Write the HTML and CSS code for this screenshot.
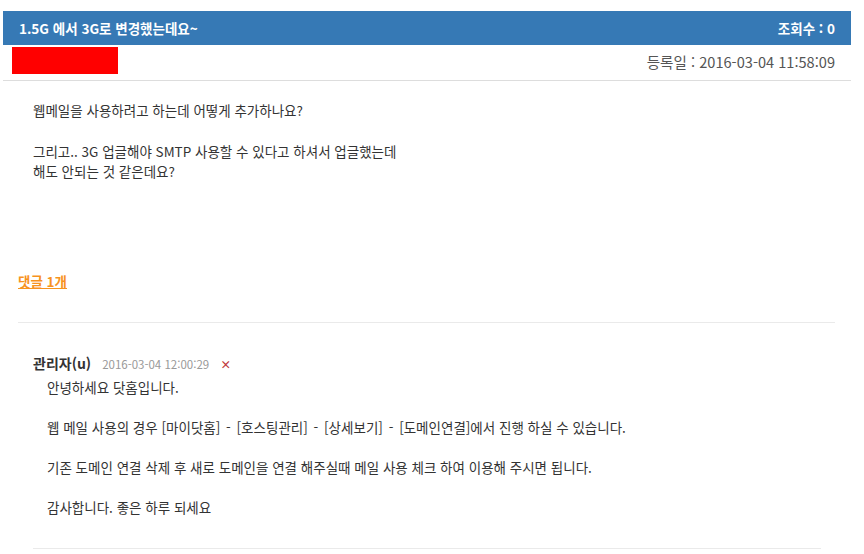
FILE: index.html
```html
<!DOCTYPE html>
<html lang="ko">
<head>
<meta charset="utf-8">
<link rel="stylesheet" href="styles.css">
</head>
<body>
<div class="post">
  <div class="head">
    <h1 class="title">1.5G 에서 3G로 변경했는데요~</h1>
    <span class="views">조회수 : 0</span>
  </div>
  <div class="meta">
    <span class="redact"></span>
    <span class="date">등록일 : 2016-03-04 11:58:09</span>
  </div>
  <div class="content">
    <p>웹메일을 사용하려고 하는데 어떻게 추가하나요?</p>
    <p>그리고.. 3G 업글해야 SMTP 사용할 수 있다고 하셔서 업글했는데<br>해도 안되는 것 같은데요?</p>
  </div>
  <div class="comments">
    <a class="count" href="#">댓글 1개</a>
    <div class="comment">
      <div class="c-head">
        <span class="author">관리자(u)</span>
        <span class="c-date">2016-03-04 12:00:29</span>
        <span class="del">×</span>
      </div>
      <div class="c-body">
        <p>안녕하세요 닷홈입니다.</p>
        <p>웹 메일 사용의 경우 [마이닷홈] <span class="dash">-</span> [호스팅관리] <span class="dash">-</span> [상세보기] <span class="dash">-</span> [도메인연결]에서 진행 하실 수 있습니다.</p>
        <p>기존 도메인 연결 삭제 후 새로 도메인을 연결 해주실때 메일 사용 체크 하여 이용해 주시면 됩니다.</p>
        <p>감사합니다. 좋은 하루 되세요</p>
      </div>
    </div>
  </div>
</div>
</body>
</html>
```
FILE: styles.css
```css
html, body {
  margin: 0;
  padding: 0;
  background: #fff;
}
body {
  font-family: "Noto Sans CJK KR", "Noto Sans", sans-serif;
  color: #333;
  font-size: 13.5px;
}
.post {
  width: 848px;
  margin: 11px 0 0 3px;
}
.head {
  height: 34px;
  background: #3679b5;
  display: flex;
  align-items: center;
  justify-content: space-between;
  padding: 0 16px;
  color: #fff;
}
.title {
  margin: 0;
  font-size: 13.5px;
  font-weight: bold;
}
.views {
  font-size: 13.5px;
  font-weight: bold;
}
.meta {
  height: 35px;
  display: flex;
  align-items: center;
  justify-content: space-between;
  padding: 0 16px 0 9px;
  border-bottom: 1px solid #ddd;
}
.redact {
  width: 106px;
  height: 27px;
  background: #ff0000;
  margin-top: -4px;
}
.date {
  font-size: 14.6px;
  color: #555;
  margin-top: -2px;
}
.content {
  padding: 19px 30px 0 30px;
  height: 165px;
  line-height: 20px;
  color: #333;
}
.content p {
  margin: 0 0 21px 0;
}
.comments {
  padding: 0 16px 0 15px;
}
.count {
  display: inline-block;
  color: #f7931e;
  font-weight: bold;
  font-size: 13.5px;
  text-decoration: underline;
  line-height: 20px;
  margin-top: 6px;
}
.comment {
  border-top: 1px solid #eaeaea;
  margin-top: 31px;
  padding: 29px 0 0 15px;
}
.c-head {
  display: flex;
  align-items: baseline;
  line-height: 22px;
}
.author {
  font-weight: bold;
  font-size: 14px;
  color: #333;
}
.c-date {
  font-size: 11.5px;
  color: #999;
  margin-left: 11px;
}
.del {
  font-size: 11px;
  color: #c0393b;
  margin-left: 11px;
  font-weight: bold;
}
.c-body {
  margin-top: 2px;
  padding: 0 0 11px 14px;
  line-height: 20px;
  border-bottom: 1px solid #eaeaea;
  margin-right: 14px;
}
.c-body p {
  margin: 0 0 20px 0;
}
.dash {
  display: inline-block;
  padding: 0 2px;
}
```
